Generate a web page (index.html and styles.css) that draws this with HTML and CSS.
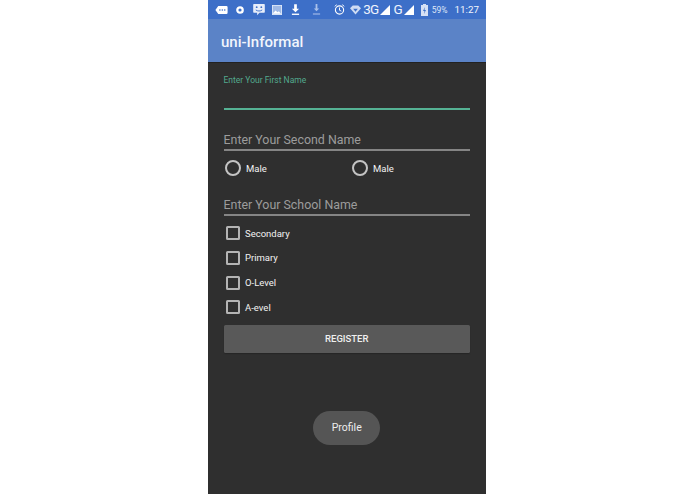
FILE: index.html
```html
<!DOCTYPE html>
<html lang="en">
<head>
<meta charset="utf-8">
<title>uni-Informal</title>
<link rel="stylesheet" href="styles.css">
</head>
<body>
<main class="phone">
  <header class="status">
    <div class="status-left">
      <svg class="i" width="13" height="10" viewBox="0 0 16 12"><path d="M4 1h10a1.500 1.500 0 0 1 1.500 1.500v7A1.500 1.500 0 0 1 14 11H4L.5 6z" fill="#fff"/><circle cx="6" cy="6" r="1" fill="#3d6fc8"/><circle cx="9" cy="6" r="1" fill="#3d6fc8"/><circle cx="12" cy="6" r="1" fill="#3d6fc8"/></svg>
      <svg class="i s-disc" width="8" height="8" viewBox="0 0 10 10"><circle cx="5" cy="5" r="3.400" fill="none" stroke="#fff" stroke-width="2.800"/></svg>
      <svg class="i s-face" width="12" height="13" viewBox="0 0 13 14"><path d="M1 1h11a.800.800 0 0 1 .800.800v8a.800.800 0 0 1-.800.800H7l-2.500 2.500V10.600H1a.800.800 0 0 1-.800-.800v-8A.800.800 0 0 1 1 1z" fill="#e8eefa"/><path d="M3 7.500c2 1.500 5 1.500 7 0" stroke="#3d6fc8" fill="none"/><circle cx="4" cy="4.500" r="1" fill="#3d6fc8"/><circle cx="9" cy="4.500" r="1" fill="#3d6fc8"/></svg>
      <svg class="i s-pic" width="10" height="10" viewBox="0 0 11 11"><rect x=".5" y=".5" width="10" height="10" fill="#9fb9e6" stroke="#dfe8f8"/><path d="M1 9l3-3 2 2 1.500-1L10 9.500H1z" fill="#fff"/></svg>
      <svg class="i s-down" width="9" height="12" viewBox="0 0 10 13"><path d="M3.500 0h3v5H9L5 9 1 5h2.500z" fill="#fff"/><rect x="1" y="10.500" width="8" height="1.500" fill="#fff"/></svg>
      <svg class="i s-down2" width="9" height="13" viewBox="0 0 10 14"><path d="M4 1h2v5h2L5 9 2 6h2z" fill="#a9c0ea"/><rect x="1" y="11" width="8" height="2" fill="#7f9fdc"/></svg>
    </div>
    <div class="status-right">
      <svg class="i" width="11" height="11" viewBox="0 0 12 12"><circle cx="6" cy="6.500" r="4.500" fill="none" stroke="#fff" stroke-width="1.200"/><path d="M6 3.800v3l2 1M.8 2.500 3 .8M11.200 2.500 9 .8" stroke="#fff" fill="none"/></svg>
      <svg class="i diamond" width="11" height="10" viewBox="0 0 12 10"><path d="M0 3 3 0h6l3 3-6 7z" fill="#cfdcf3"/><path d="M3.500 3.500h5L6 7z" fill="#3d6fc8"/></svg>
      <span class="net">3G</span>
      <svg class="i tri" width="10" height="10" viewBox="0 0 11 11"><path d="M11 0v11H0z" fill="#fff"/></svg>
      <span class="net net-g">G</span>
      <svg class="i tri" width="10" height="10" viewBox="0 0 11 11"><path d="M11 0v11H0z" fill="#fff"/></svg>
      <svg class="i battery" width="7" height="12" viewBox="0 0 7 12"><path d="M2 0h3v1h2v11H0V1h2z" fill="#d5e0f5"/><path d="M4 3 2 7h1.500L3 10l2-4H3.500z" fill="#3d6fc8"/></svg>
      <span class="pct">59%</span>
      <span class="clock">11:27</span>
    </div>
  </header>
  <div class="appbar"><h1 class="title">uni-Informal</h1></div>
  <form class="form">
    <div class="field field-first">
      <span class="float">Enter Your First Name</span>
      <div class="line line-active"></div>
    </div>
    <div class="field field-second">
      <span class="hint">Enter Your Second Name</span>
      <div class="line"></div>
    </div>
    <div class="radios">
      <div class="option radio-opt"><span class="radio"></span><span class="lbl">Male</span></div>
      <div class="option radio-opt"><span class="radio"></span><span class="lbl">Male</span></div>
    </div>
    <div class="field field-school">
      <span class="hint">Enter Your School Name</span>
      <div class="line"></div>
    </div>
    <div class="checks">
      <div class="option check-opt"><span class="check"></span><span class="lbl">Secondary</span></div>
      <div class="option check-opt"><span class="check"></span><span class="lbl">Primary</span></div>
      <div class="option check-opt"><span class="check"></span><span class="lbl">O-Level</span></div>
      <div class="option check-opt"><span class="check"></span><span class="lbl">A-evel</span></div>
    </div>
    <div class="register">REGISTER</div>
    <div class="toast-row"><div class="toast">Profile</div></div>
  </form>
</main>
</body>
</html>
```
FILE: styles.css
```css
* { box-sizing: border-box; }
html, body { margin: 0; height: 100%; background: #fff; }
body { display: flex; justify-content: center; overflow: hidden; padding-right: 1px; font-family: Roboto, "Liberation Sans", sans-serif; }
.phone { width: 278px; height: 494px; background: #2f2f2f; display: flex; flex-direction: column; }
.status { height: 19px; background: #3d6fc8; display: flex; justify-content: space-between; align-items: center; padding: 0 7px; color: #fff; flex: none; }
.status-left { display: flex; align-items: center; }
.status-right { display: flex; align-items: center; }
.i { display: block; flex: none; }
.s-disc { margin-left: 8px; }
.s-face { margin-left: 9px; }
.s-pic { margin-left: 7px; }
.s-down { margin-left: 9px; }
.s-down2 { margin-left: 12px; }
.diamond { margin-left: 5px; }
.net { font-size: 13.500px; line-height: 19px; letter-spacing: -.8px; color: #eef3fc; margin-left: 2px; }
.net-g { margin-left: 3px; }
.tri { margin-left: 2px; }
.battery { margin-left: 7px; }
.pct { font-size: 8.500px; margin-left: 4px; color: #dfe8f8; }
.clock { font-size: 9.800px; margin-left: 7px; color: #f2f6fd; }
.appbar { height: 44px; background: #5b83c7; border-bottom: 1px solid #222; display: flex; align-items: center; padding: 2px 13px 0; flex: none; }
.title { margin: 0; font-size: 15px; font-weight: 500; color: #f1f5fc; }
.form { padding: 0 16px 0 15.500px; display: flex; flex-direction: column; flex: 1; }
.field { display: flex; flex-direction: column; }
.field-first { padding-top: 11px; }
.float { font-size: 8.500px; line-height: 12px; color: #53a98e; }
.line { height: 2px; background: #858585; }
.line-active { height: 2px; background: #55b294; margin-top: 22px; }
.field-second { margin-top: 21px; }
.field-school { margin-top: 18px; }
.hint { font-size: 12.400px; line-height: 18px; color: #9c9c9c; }
.radios { display: grid; grid-template-columns: 127px 1fr; margin-top: 7px; }
.option { display: flex; align-items: center; }
.radio-opt { height: 20px; padding-left: 1.500px; }
.radio { width: 16px; height: 16px; border: 2px solid #c4c4c4; border-radius: 50%; margin-right: 5px; }
.lbl { font-size: 9.500px; color: #f2f2f2; }
.checks { display: flex; flex-direction: column; gap: 10.800px; margin-top: 10px; }
.check-opt { height: 14px; padding-left: 2px; }
.check { width: 14px; height: 14px; border: 2px solid #b4b4b4; border-radius: 1.500px; margin-right: 5.500px; }
.register { height: 28px; margin-top: 10.500px; background: #595959; border-radius: 1.500px; display: flex; align-items: center; justify-content: center; font-size: 9.500px; font-weight: 500; color: #f0f0f0; box-shadow: 0 1px 1px #262626; }
.toast-row { display: flex; justify-content: center; margin-top: 58px; }
.toast { width: 67px; height: 34px; border-radius: 17px; background: #555; display: flex; align-items: center; justify-content: center; font-size: 10.500px; color: #ececec; }
```
